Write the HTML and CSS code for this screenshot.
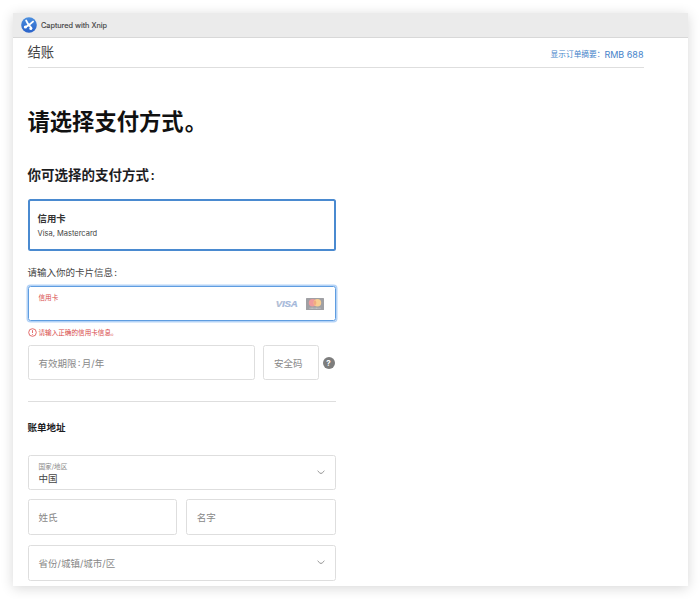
FILE: index.html
```html
<!DOCTYPE html>
<html lang="zh-CN">
<head>
<meta charset="utf-8">
<title>结账</title>
<link rel="stylesheet" href="styles.css">
</head>
<body>
<div class="window">
  <header class="titlebar">
    <svg class="logo" viewBox="0 0 16 16">
      <defs><linearGradient id="disc" x1="0" y1="0" x2="0" y2="1"><stop offset="0" stop-color="#4b8fdf"/><stop offset="1" stop-color="#2a62c9"/></linearGradient></defs>
      <circle cx="8" cy="8" r="7.8" fill="url(#disc)"/>
      <path d="M5.2 3.6L7.6 8M12 4.6L8 8L4.8 9.8M8 8L10.4 11" fill="none" stroke="#fff" stroke-width="1.9" stroke-linecap="round"/>
      <circle cx="4.4" cy="10" r="1.6" fill="#fff"/>
      <circle cx="9.8" cy="11.6" r="1.5" fill="#fff"/>
    </svg>
    <span>Captured with Xnip</span>
  </header>
  <main class="page">
    <div class="checkout">
      <span class="checkout-title">结账</span>
      <a class="summary">显示订单摘要：<span class="price">RMB 688</span></a>
    </div>
    <h1>请选择支付方式<span class="stop">。</span></h1>
    <div class="form">
      <h2>你可选择的支付方式<span class="colon">:</span></h2>
      <div class="option">
        <strong>信用卡</strong>
        <span>Visa, Mastercard</span>
      </div>
      <p class="prompt">请输入你的卡片信息<span class="colon">:</span></p>
      <div class="field card-field">
        <span class="mini">信用卡</span>
        <span class="visa">VISA</span>
        <svg class="mastercard" viewBox="0 0 18 12">
          <rect width="18" height="12" rx=".5" fill="#a0a0a4"/>
          <circle cx="6.6" cy="4.8" r="3.8" fill="#ef9a9c"/>
          <circle cx="11.4" cy="4.8" r="3.8" fill="#f8ce91"/>
          <path d="M9 1.9a3.8 3.8 0 0 1 0 5.8a3.8 3.8 0 0 1 0-5.8" fill="#f3aa80"/>
          <path d="M3.5 10.2h11" stroke="#d5d5d7" stroke-width=".9" stroke-dasharray="1 .3"/>
        </svg>
      </div>
      <div class="error">
        <svg viewBox="0 0 9 9"><circle cx="4.5" cy="4.5" r="3.8" fill="none" stroke="#dc4a4a" stroke-width=".8"/><path d="M4.5 2.2v2.8M4.5 6v.8" stroke="#dc4a4a" stroke-width=".8"/></svg>
        <span>请输入正确的信用卡信息。</span>
      </div>
      <div class="row expiry-row">
        <div class="field expiry">有效期限<span class="colon spaced">:</span>月/年</div>
        <div class="field code">安全码</div>
        <span class="help">?</span>
      </div>
      <h3>账单地址</h3>
      <div class="field country">
        <div class="stack"><span class="mini">国家/地区</span><span class="value">中国</span></div>
        <svg class="chevron" viewBox="0 0 8 5"><path d="M.6 .8Q3 3.5 4 3.5T7.4 .8" fill="none" stroke="#868686" stroke-width=".9"/></svg>
      </div>
      <div class="row name-row">
        <div class="field">姓氏</div>
        <div class="field">名字</div>
      </div>
      <div class="field province">
        <span>省份/城镇/城市/区</span>
        <svg class="chevron" viewBox="0 0 8 5"><path d="M.6 .8Q3 3.5 4 3.5T7.4 .8" fill="none" stroke="#868686" stroke-width=".9"/></svg>
      </div>
    </div>
  </main>
</div>
</body>
</html>
```
FILE: styles.css
```css
* { box-sizing: border-box; }
body {
  margin: 0;
  height: 599px;
  padding: 13px 12.5px;
  overflow: hidden;
  background: #fff;
  color: #1d1d1f;
  font-family: Inter, "Noto Sans CJK SC", sans-serif;
}
.window {
  height: 573px;
  overflow: hidden;
  background: #fff;
  box-shadow: 0 2px 12px rgba(0, 0, 0, .16);
}
.titlebar {
  height: 25px;
  display: flex;
  align-items: center;
  gap: 4px;
  padding-left: 8.5px;
  background: #ebebeb;
  border-bottom: 1px solid #d8d8d8;
  color: #444;
  font-size: 7.3px;
  -webkit-text-stroke: .15px #444;
}
.logo { width: 16px; height: 16px; }
.page { padding-left: 15px; }
.checkout {
  width: 616px;
  height: 30px;
  display: flex;
  justify-content: space-between;
  align-items: center;
  border-bottom: 1px solid #dedede;
}
.checkout-title { margin-top: -2px; font-size: 13.3px; line-height: 20px; color: #444; }
.summary { display: flex; align-items: center; margin-top: 4px; font-size: 7.7px; line-height: 12px; color: #4583ca; }
.price { font-size: 9px; }
h1, h2, h3, p { margin: 0; }
h1 { margin-top: 37px; font-size: 22.3px; line-height: 34px; font-weight: 600; color: #111; }
.stop { margin-left: 1.2px; }
.form { width: 308px; }
h2 { margin-top: 26px; font-size: 13.5px; line-height: 20px; font-weight: 600; }
.colon { margin-left: .12em; }
.spaced { margin-right: .15em; }
.option {
  height: 52px;
  margin-top: 14px;
  padding: 10px 8px 0;
  display: flex;
  flex-direction: column;
  border: 2px solid #4a8ad0;
  border-radius: 2.5px;
}
.option strong { font-size: 9.4px; line-height: 15px; font-weight: 600; color: #333; }
.option span { font-size: 7.5px; line-height: 15px; color: #444; }
.prompt { margin-top: 13px; font-size: 9.5px; line-height: 17px; color: #444; }
.field {
  height: 36px;
  display: flex;
  align-items: center;
  padding: 0 10px;
  border: 1px solid #dedede;
  border-radius: 2.5px;
  font-size: 9.5px;
  color: #888;
}
.mini { font-size: 6.6px; line-height: 9px; }
.card-field {
  height: 35px;
  margin-top: 5px;
  border-color: #5f9de0;
  box-shadow: 0 0 0 1.5px #b4d3f7;
}
.card-field .mini { align-self: flex-start; margin-top: 7px; color: #d84949; }
.visa {
  margin-left: auto;
  font: italic bold 9.7px "Liberation Sans", sans-serif;
  letter-spacing: -.2px;
  color: #a3b7da;
  -webkit-text-stroke: .2px #a3b7da;
}
.visa::first-letter { color: #b3bed2; }
.mastercard { width: 18px; height: 12px; margin: 0 1px 0 8px; }
.error { height: 10px; margin-top: 6px; display: flex; align-items: center; gap: 2px; font-size: 6.6px; color: #d84949; }
.error svg { width: 9px; height: 9px; }
.row { display: flex; }
.expiry-row { align-items: center; margin-top: 8px; }
.expiry-row .field { height: 35px; }
.expiry { width: 227px; }
.code { width: 56px; margin-left: 8.5px; }
.help {
  width: 12px;
  height: 12px;
  margin-left: 3.5px;
  border-radius: 50%;
  background: #7d7d7d;
  color: #fff;
  font-size: 8px;
  font-weight: 700;
  line-height: 12px;
  text-align: center;
}
h3 { margin-top: 21px; padding-top: 17px; border-top: 1px solid #dedede; font-size: 9.5px; line-height: 17px; font-weight: 700; }
.country { height: 35px; margin-top: 19px; justify-content: space-between; }
.stack { display: flex; flex-direction: column; padding-top: 3px; }
.value { font-size: 9.5px; line-height: 14px; color: #444; }
.chevron { width: 8px; height: 5px; }
.name-row { margin-top: 9px; gap: 8.5px; }
.name-row .field { flex: 1; }
.province { margin-top: 10px; justify-content: space-between; }
.province .chevron { margin-bottom: 2px; }
```
